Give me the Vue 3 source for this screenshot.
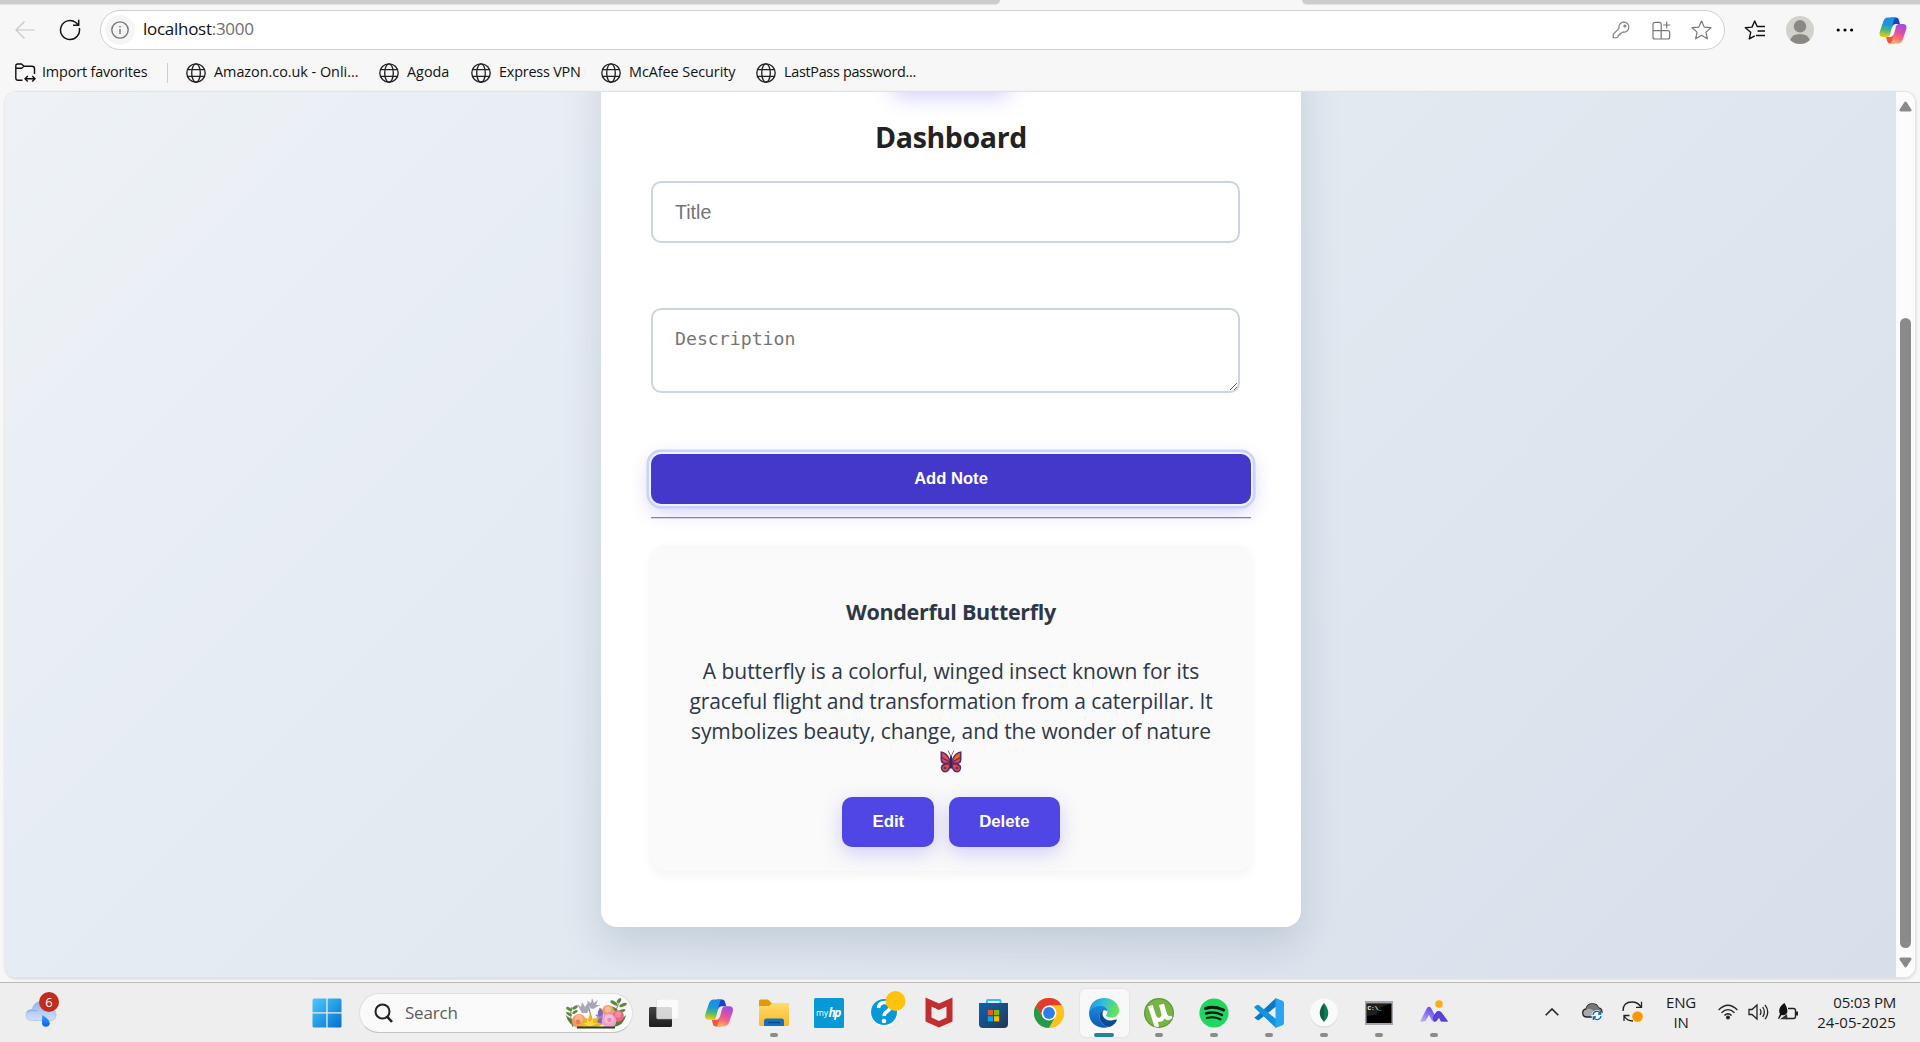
<script setup>
import { ref } from 'vue'

const bookmarks = [
  { label: 'Amazon.co.uk - Onli...', width: 145, spacing: -0.02 },
  { label: 'Agoda', width: 44, spacing: 0 },
  { label: 'Express VPN', width: 82, spacing: -0.2 },
  { label: 'McAfee Security', width: 107, spacing: -0.05 },
  { label: 'LastPass password...', width: 134, spacing: -0.3 }
]
const title = ref('')
const description = ref('')
</script>

<template>
  <div class="screen">
    <svg class="defs" width="0" height="0">
      <defs>
        <linearGradient id="cpA" x1="0.4" y1="0" x2="0.3" y2="1">
          <stop offset="0" stop-color="#1a8df0" /><stop offset="0.35" stop-color="#1b95d8" />
          <stop offset="0.65" stop-color="#4db774" /><stop offset="1" stop-color="#f5cf0a" />
        </linearGradient>
        <linearGradient id="cpB" x1="0.7" y1="0" x2="0.4" y2="1">
          <stop offset="0" stop-color="#9a4cf0" /><stop offset="0.45" stop-color="#e0519f" />
          <stop offset="0.75" stop-color="#fb6f7b" /><stop offset="1" stop-color="#ffb268" />
        </linearGradient>
        <symbol id="copilot" viewBox="0 0 28 27">
          <path d="M12 .5H17C18.7.5 19.4 1.6 19.9 3.2L21 7H17C14.8 7 14 8.2 13.4 10Z" fill="#1743c4" />
          <path d="M16 26.5H11C9.3 26.5 8.6 25.4 8.1 23.8L7 20H11C13.2 20 14 18.8 14.6 17Z" fill="#f4553c" />
          <path d="M16.8.5H9C6.3.5 5 2.4 4.1 5L1 14C-.2 17.6.8 20 4 20H7.8C9.6 20 10.6 19 11.2 17L14.2 5.6C14.8 3.2 15.2 1.4 16.8.5Z" fill="url(#cpA)" />
          <path d="M11.2 26.5H19C21.7 26.5 23 24.6 23.9 22L27 13C28.2 9.4 27.2 7 24 7H20.2C18.4 7 17.4 8 16.8 10L13.8 21.4C13.2 23.8 12.8 25.6 11.2 26.5Z" fill="url(#cpB)" />
        </symbol>
        <symbol id="globe" viewBox="0 0 20 20">
          <g fill="none" stroke="#222" stroke-width="1.35">
            <circle cx="10" cy="10" r="9.2" /><ellipse cx="10" cy="10" rx="4.3" ry="9.2" />
            <path d="M1.6 6.6H18.4M1.6 13.4H18.4" />
          </g>
        </symbol>
      </defs>
    </svg>

    <div class="tabs"><span class="tab-left"></span><span class="tab-right"></span></div>

    <div class="toolbar">
      <svg class="back" width="20" height="20" viewBox="0 0 20 20" fill="none" stroke="#c6c6c6" stroke-width="1.2"><path d="M19.5 10H1M9.5 1.5L1 10L9.5 18.5" /></svg>
      <svg class="reload" width="22" height="22" viewBox="0 0 22 22" fill="none" stroke="#111" stroke-width="1.5"><path d="M20.3 9A9.5 9.5 0 1 1 16.8 3.5L19.5 6M19.7 .8V6.3H14" /></svg>
      <div class="address">
        <span class="site-info">
          <svg width="18" height="18" viewBox="0 0 18 18" fill="none" stroke="#707070" stroke-width="1.3"><circle cx="9" cy="9" r="8.2" /><path d="M9 8V13" /><path d="M9 5V6.5" /></svg>
        </span>
        <span class="url">localhost<em>:3000</em></span>
        <svg class="key" width="18" height="18" viewBox="0 0 18 18" fill="none" stroke="#777" stroke-width="1.1"><path d="M7 7.3A5 5 0 1 1 10.7 11L9.5 12.2H8V14H6.2V15.7L5 16.8H1.2V13.3Z" stroke-linejoin="round" /><circle cx="12.9" cy="5" r="1" /></svg>
        <svg class="apps" width="19" height="19" viewBox="0 0 19 19" fill="none" stroke="#777" stroke-width="1.2"><path d="M9.2 9.6V3.3Q9.2 1.3 7.200 1.3H3Q1 1.3 1 3.300V16Q1 18 3 18H15.700Q17.700 18 17.700 16V11.500Q17.700 9.600 15.700 9.600H1M9.200 18V9.600M14.700 .5V7.500M11.200 4H18.200" /></svg>
        <svg class="star" width="21" height="20" viewBox="0 0 21 20" fill="none" stroke="#777" stroke-width="1.2" stroke-linejoin="round"><path d="M10.5 1L13.2 7.1L20 7.7L14.9 12.1L16.4 18.8L10.5 15.3L4.6 18.8L6.1 12.1L1 7.7L7.8 7.1Z" /></svg>
      </div>
      <svg class="favs" width="22" height="20" viewBox="0 0 22 20" fill="none" stroke="#111" stroke-width="1.4" stroke-linejoin="round"><path d="M10.8 15.8L5.3 18.9L6.7 12.3L1.3 7.8L8 7.1L10.7 1L13.2 6.5H21M13.5 11H21M12 15.5H21" /></svg>
      <svg class="avatar" width="28" height="28" viewBox="0 0 28 28"><circle cx="14" cy="14" r="14" fill="#d3d1cc" /><circle cx="14" cy="10.3" r="6.2" fill="#8b8784" /><path d="M4.2 24Q6 18 14 18T23.8 24A14 14 0 0 1 4.2 24Z" fill="#8b8784" /></svg>
      <svg class="dots" width="18" height="4" viewBox="0 0 18 4"><circle cx="2.2" cy="2" r="1.6" /><circle cx="9" cy="2" r="1.6" /><circle cx="15.6" cy="2" r="1.6" /></svg>
      <svg class="cp-top" width="28" height="27"><use href="#copilot" /></svg>
    </div>

    <div class="bookmarks">
      <svg width="21" height="20" viewBox="0 0 21 20" fill="none" stroke="#111" stroke-width="1.4"><path d="M7.5 17.3H3Q.8 17.3.8 15V3Q.8 1 2.8 1H6.5L9 3.3H17Q19.5 3.3 19.5 5.8V11M.8 5.3H6.5L9 3.3M10.5 15.8H19.5M12.8 13L10 15.8L12.8 18.6M17.2 13L20 15.8L17.2 18.6" /></svg>
      <span class="import">Import favorites</span>
      <span class="divider"></span>
      <div v-for="b in bookmarks" :key="b.label" class="bookmark">
        <svg width="20" height="20"><use href="#globe" /></svg>
        <span :style="{ width: b.width + 'px', letterSpacing: b.spacing + 'px' }">{{ b.label }}</span>
      </div>
    </div>

    <div class="frame">
      <main class="page">
        <section class="card">
          <button class="btn logout"></button>
          <h2>Dashboard</h2>
          <input v-model="title" class="field" placeholder="Title" />
          <textarea v-model="description" class="field area" placeholder="Description"></textarea>
          <button class="btn add">Add Note</button>
          <hr />
          <article class="note">
            <h3>Wonderful Butterfly</h3>
            <p>
              <span class="l1">A butterfly is a colorful, winged insect known for its</span><br />
              <span class="l2">graceful flight and transformation from a caterpillar. It</span><br />
              <span class="l3">symbolizes beauty, change, and the wonder of nature</span>
            </p>
            <div class="emoji">
              <svg width="22" height="23" viewBox="0 0 22 23">
                <path d="M.5 1.2Q7 1.6 10.3 9.5H11.7Q15 1.6 21.5 1.2V10Q21 13.6 18.5 13.8Q21.4 14.8 21.2 18Q20.6 22.4 16.8 22.5Q12.8 22 11.5 17H10.5Q9.2 22 5.2 22.5Q1.4 22.4.8 18Q.6 14.8 3.5 13.8Q1 13.6.5 10Z" fill="#5b2d68" />
                <path d="M2 3Q7 4.5 9.3 11L2.4 7.2ZM2 8.6L8.8 12.2Q3 13.5 2 10ZM2.3 17.5Q4 14 9.2 14.8Q8.6 20.5 5 21Q2 20.6 2.3 17.5Z" fill="#e24b4f" />
                <path d="M20 3Q15 4.5 12.7 11L19.6 7.2Z" fill="#ff6507" />
                <path d="M20 8.6L13.2 12.2Q19 13.5 20 10ZM19.7 17.5Q18 14 12.8 14.8Q13.4 20.5 17 21Q20 20.6 19.7 17.5Z" fill="#e24b4f" />
                <circle cx="5" cy="18" r="1.3" fill="#5b2d68" /><circle cx="17" cy="18" r="1.3" fill="#5b2d68" />
                <path d="M11 6V18.5" stroke="#412052" stroke-width="2" /><path d="M11 6.5L8 .5M11 6.5L14 .5" stroke="#6b4b77" stroke-width=".8" fill="none" />
              </svg>
            </div>
            <div class="actions">
              <button class="btn">Edit</button>
              <button class="btn">Delete</button>
            </div>
          </article>
        </section>
      </main>
      <div class="scrollbar">
        <svg width="13" height="11" viewBox="0 0 13 11"><path d="M5.2 1.5Q6.5-.3 7.8 1.5L12.3 8.3Q13 10.3 11 10.5H2Q0 10.3.7 8.3Z" fill="#8a8a8a" /></svg>
        <span class="thumb"></span>
        <svg width="13" height="11" viewBox="0 0 13 11"><path d="M5.2 9.5Q6.5 11.3 7.8 9.5L12.3 2.7Q13 .7 11 .5H2Q0 .7.7 2.7Z" fill="#8a8a8a" /></svg>
      </div>
    </div>

    <footer class="taskbar">
      <div class="weather">
        <svg width="36" height="38" viewBox="0 0 36 38">
          <defs><linearGradient id="cl" x1="0" y1="0" x2="0" y2="1"><stop offset="0" stop-color="#8fb2ee" /><stop offset="1" stop-color="#d3e1f7" /></linearGradient>
            <linearGradient id="dr" x1="0" y1="0" x2="0" y2="1"><stop offset="0" stop-color="#3d9bff" /><stop offset="1" stop-color="#0a62e8" /></linearGradient></defs>
          <path d="M7 30.5Q1 30.5 1 25T7 19.5Q9 11.5 16 11.5T25.5 18.5Q31 19.5 31 25T25 30.5Z" fill="url(#cl)" stroke="#9bb8ea" stroke-width=".6" />
          <path d="M2 22Q6 18.5 12 21" fill="none" stroke="#84a7e6" />
          <path d="M17.2 25Q25 29.5 24.8 33.8A4 4 0 0 1 17 33.5Z" fill="url(#dr)" />
        </svg>
        <span class="count">6</span>
      </div>
      <svg class="start" width="30" height="30" viewBox="0 0 30 30">
        <defs><linearGradient id="win" x1="0" y1="0" x2="1" y2="1"><stop offset="0" stop-color="#4cc9fb" /><stop offset="1" stop-color="#0370cd" /></linearGradient></defs>
        <path d="M.5 2Q.5.5 2 .5H14.3V14.3H.5ZM15.6.5H28Q29.5.5 29.5 2V14.3H15.6ZM.5 15.6H14.3V29.5H2Q.5 29.5.5 28ZM15.6 15.6H29.5V28Q29.5 29.5 28 29.5H15.6Z" fill="url(#win)" />
      </svg>
      <div class="search">
        <svg width="19" height="20" viewBox="0 0 19 20" fill="none" stroke="#222" stroke-width="2"><circle cx="8.5" cy="8.5" r="7" /><path d="M13.2 13.7L18 19" stroke-width="2.6" /></svg>
        <span>Search</span>
        <svg class="flowers" width="62" height="32" viewBox="0 0 62 32">
          <path d="M1 18Q3 29 14 30L18 24Q8 25 1 18ZM61 18Q59 29 48 30L44 24Q54 25 61 18Z" fill="#4e7e3a" />
          <path d="M8 30Q4 19 7 10M50 26Q49 12 56 3M28 26L24 12M32 26L35 11" stroke="#6b8b52" fill="none" />
          <g fill="#5f8745"><ellipse cx="4" cy="12" rx="3.2" ry="1.5" transform="rotate(35 4 12)" /><ellipse cx="10" cy="10.5" rx="3.2" ry="1.5" transform="rotate(-35 10 10.5)" /><ellipse cx="4" cy="17" rx="3.2" ry="1.4" transform="rotate(30 4 17)" /><ellipse cx="10" cy="15" rx="3" ry="1.4" transform="rotate(-30 10 15)" /><ellipse cx="49" cy="6" rx="4" ry="1.8" transform="rotate(30 49 6)" /><ellipse cx="58" cy="8" rx="4" ry="1.7" transform="rotate(-20 58 8)" /><ellipse cx="49" cy="12" rx="4" ry="1.7" transform="rotate(25 49 12)" /><ellipse cx="57" cy="14" rx="3.5" ry="1.5" transform="rotate(-20 57 14)" /><ellipse cx="54" cy="3.5" rx="3" ry="1.5" transform="rotate(-50 54 3.5)" /></g>
          <path d="M17 16L12 7L16 10L17 5L20 10L24 4V11L27 8L22 16ZM25 11L22 4L26 6L27 1L29 6L33 3L31 8L35 8L28 12Z" fill="#a9a6b7" />
          <circle cx="14" cy="24" r="7" fill="#f39a68" /><circle cx="14" cy="22" r="4.2" fill="#f9b487" /><circle cx="13" cy="25" r="2.4" fill="#e87e4e" />
          <circle cx="43" cy="14" r="6" fill="#f29a70" /><circle cx="43" cy="12.5" r="3" fill="#f8bd94" />
          <path d="M32 28L33 14L36 11L38 15L37 28Z" fill="#7f68b8" /><path d="M31 18L39 22M31 24L38 18" stroke="#9883cb" stroke-width="1.5" />
          <circle cx="53" cy="19" r="5.8" fill="#ee6583" /><circle cx="53" cy="17.5" r="3" fill="#f58d9f" />
          <circle cx="44" cy="24" r="7.3" fill="#f0a0cb" /><circle cx="44" cy="22" r="4.6" fill="#f7bcdb" /><circle cx="44.5" cy="23" r="2.3" fill="#e887bb" />
          <path d="M25 31L13 28L19 25L18 20L23 22L25 17L28 22L34 20L32 25L38 27L31 31Z" fill="#edb51e" /><path d="M25 30L18 26L22 26L22 22L25 25L28 21L28 26L33 26Z" fill="#fad84a" />
          <path d="M12 30.5H50" stroke="#28401d" stroke-width="2" />
        </svg>
      </div>

      <div class="apps-row">
        <div class="app">
          <svg width="30" height="28" viewBox="0 0 30 28"><defs><linearGradient id="tv" x1="0" y1="0" x2="0" y2="1"><stop offset="0" stop-color="#444" /><stop offset="1" stop-color="#1d1d1d" /></linearGradient></defs><rect x="0" y="8" width="23" height="20" rx="1.5" fill="url(#tv)" /><rect x="7.5" y="0" width="22.5" height="20" rx="1.5" fill="#fdfdfd" opacity=".8" stroke="#d0d0d0" stroke-width=".5" /></svg>
        </div>
        <div class="app"><svg width="30" height="28"><use href="#copilot" /></svg></div>
        <div class="app run">
          <svg width="30" height="28" viewBox="0 0 30 28"><defs><linearGradient id="fo" x1="0" y1="0" x2="0" y2="1"><stop offset="0" stop-color="#ffdc6d" /><stop offset="1" stop-color="#fbb923" /></linearGradient></defs><path d="M0 2Q0 .5 1.5.5H9L12.5 4H28Q30 4 30 6V12H0Z" fill="#dd9c0a" /><path d="M0 7H10L13 4H28.5Q30 4 30 5.5V25.5Q30 27 28.5 27H1.5Q0 27 0 25.5Z" fill="url(#fo)" /><path d="M5 27V22Q5 19.5 7.5 19.5H22.5Q25 19.5 25 22V27Z" fill="#126fc2" /><path d="M9 23.5H21" stroke="#07458a" stroke-width="1.4" /></svg>
        </div>
        <div class="app">
          <svg class="myhp" width="30" height="30" viewBox="0 0 30 30"><rect width="30" height="30" rx="1.5" fill="#0798d8" /><text x="2" y="18" fill="#fff" font-size="8.5" font-family="Open Sans, sans-serif">my</text><text x="14.5" y="18.500" fill="#fff" font-size="12" letter-spacing="-1.6" font-weight="700" font-style="italic" font-family="Open Sans, sans-serif">hp</text></svg>
        </div>
        <div class="app">
          <svg class="help" width="36" height="36" viewBox="0 0 36 36"><circle cx="14.5" cy="21.5" r="14" fill="#fff" /><circle cx="14" cy="21" r="13" fill="#0798d8" /><path d="M8.5 17Q9 11.5 14.5 11.5T20 16Q20 18.8 17 20.5T14.2 25" fill="none" stroke="#fff" stroke-width="3.6" /><circle cx="14" cy="30" r="2.3" fill="#fff" /><circle cx="25.5" cy="10" r="10" fill="#ffc20e" /></svg>
        </div>
        <div class="app">
          <svg width="28" height="31" viewBox="0 0 28 31"><path d="M.5.5L14 6.5L27.500.5V24.500L14 30.500L.5 24.500Z" fill="#c22e30" /><path d="M6.500 9.500L14 13L21.500 9.500V20.500L14 24L6.500 20.500Z" fill="#eee" /></svg>
        </div>
        <div class="app">
          <svg class="store" width="29" height="30" viewBox="0 0 29 30"><defs><linearGradient id="ms" x1="0" y1="0" x2="1" y2="1"><stop offset="0" stop-color="#0f62b0" /><stop offset="1" stop-color="#253556" /></linearGradient></defs><path d="M8 6V3Q8 2 9 2H20.500Q21.500 2 21.500 3V6" fill="none" stroke="#32c0f6" stroke-width="2" /><path d="M0 5H29V26Q29 30 25 30H4Q0 30 0 26Z" fill="url(#ms)" /><path d="M8.800 12H14V17.200H8.800Z" fill="#f35325" /><path d="M15 12H20.200V17.200H15Z" fill="#81bc06" /><path d="M8.800 18.200H14V23.400H8.800Z" fill="#05a6f0" /><path d="M15 18.200H20.200V23.400H15Z" fill="#ffba08" /></svg>
        </div>
        <div class="app">
          <svg width="30" height="30" viewBox="0 0 30 30"><circle cx="15" cy="15" r="15" fill="#fdc31c" /><path d="M2 7.500A15 15 0 0 1 28 7.500H15L8.500 18.750Z" fill="#e33b2e" /><path d="M2 7.500A15 15 0 0 0 15 30L21.500 18.750H8.500Z" fill="#229a49" /><path d="M15 7.500H28A15 15 0 0 1 15 30L21.500 18.750Z" fill="#fdc31c" /><circle cx="15" cy="15" r="7.500" fill="#fff" /><circle cx="15" cy="15" r="5.900" fill="#2f7ded" /></svg>
        </div>
        <div class="app run active">
          <svg width="30" height="30" viewBox="0 0 30 30"><defs><linearGradient id="e1" x1="0" y1="0" x2="1" y2=".3"><stop offset="0" stop-color="#1c8fe0" /><stop offset=".5" stop-color="#31bfd8" /><stop offset="1" stop-color="#64e25a" /></linearGradient><linearGradient id="e2" x1="0" y1="0" x2="0" y2="1"><stop offset="0" stop-color="#1a8ae0" /><stop offset="1" stop-color="#0d59b4" /></linearGradient></defs><path d="M0 14C1 5 7 0 15 0C24 0 30 6 30 12.500C30 17 26.500 19.500 22.500 19.500C19 19.500 17 18.300 17 17.300C17 16.500 18.500 16 18.500 13.500C18.500 11 16 8 11.500 8C5 8 1 11 0 14Z" fill="url(#e1)" /><path d="M0 15C0 11 5 7.800 11.500 7.800C16.500 7.800 18.600 11.200 18.500 13.500C15.500 10.500 10.500 13.500 10.500 18.500C10.500 24 15 28 20 29C9 32 0 25 0 15Z" fill="url(#e2)" /><path d="M10.500 18.500C10.500 15 12.500 12.700 14.500 12.300C11.500 17 15.500 22.500 21 22.500C24.500 22.500 26.500 20.800 27.700 21.600C28.500 22.500 25 28 20 29C15 28 10.500 24 10.500 18.500Z" fill="#0c4a94" /></svg>
        </div>
        <div class="app run">
          <svg width="30" height="30" viewBox="0 0 30 30"><circle cx="15" cy="15" r="15" fill="#5a9a35" /><circle cx="15" cy="15" r="13.700" fill="#76b446" /><path d="M4 8.500L8.700 7L12 17.500Q13.200 20.500 15.800 19.500Q18 18.500 17.300 15.500L15 7L20 5.800L23 16Q24 19 27.500 17.800L28.500 20Q24 24 20.500 20.500Q18.500 24.500 14 23.500L15 29L10.500 28.500Z" fill="#fff" /></svg>
        </div>
        <div class="app run">
          <svg width="30" height="30" viewBox="0 0 30 30"><circle cx="15" cy="15" r="14.600" fill="#1ed760" /><g fill="none" stroke="#0b1710" stroke-linecap="round"><path d="M6.500 10.500Q16 7.500 24.500 12" stroke-width="3" /><path d="M7 15.500Q15.500 12.800 23 17" stroke-width="2.400" /><path d="M7.800 20Q15 17.800 21.500 21.300" stroke-width="2" /></g></svg>
        </div>
        <div class="app run">
          <svg width="30" height="30" viewBox="0 0 30 30"><path d="M2 18.500L22 0V8.500L5 22Q4 22.600 3 21.800L.7 20Q0 19.200 2 18.500Z" fill="#0a78c4" /><path d="M.7 10Q0 9 .7 8.500L3 7Q4 6.500 5 7.200L22 21V30Z" fill="#1592dd" /><path d="M21.500 0L28.500 2.800Q30 3.500 30 5V25Q30 26.500 28.500 27.200L21.500 30Z" fill="#28a4f0" /></svg>
        </div>
        <div class="app run">
          <svg width="30" height="30" viewBox="0 0 30 30"><circle cx="15" cy="15.500" r="14" fill="#d5d5d5" /><circle cx="15" cy="14.500" r="14" fill="#fafafa" /><path d="M15 5Q21.500 13 18 20L15 24V5Z" fill="#0b7d54" /><path d="M15 5Q8.500 13 12 20L15 24V5Z" fill="#0c5e45" /></svg>
        </div>
        <div class="app run">
          <svg width="28" height="24" viewBox="0 0 28 24"><rect width="28" height="24" fill="#a2a7ad" /><rect x="1.500" y="2.500" width="25" height="19.500" fill="#000" /><path d="M2 3H25Q14 5 11 14L2 15Z" fill="#333" opacity=".6" /><text x="2.500" y="8.500" fill="#fff" font-size="6" font-family="Liberation Mono, monospace" font-weight="700">C:\_</text></svg>
        </div>
        <div class="app run">
          <svg class="mtn" width="30" height="24" viewBox="0 0 30 24"><defs><linearGradient id="mt" x1="0" y1="1" x2="1" y2="0"><stop offset="0" stop-color="#c4b5ff" /><stop offset=".5" stop-color="#7a64e8" /><stop offset="1" stop-color="#5134cf" /></linearGradient></defs><path d="M1 22.500L8 9Q10 6.500 12 9L15.500 15.500L18 12.500Q20.500 11 22.500 13.500L29 22.500H22L20 18.500L17.500 22Q15 24 12.500 21L10 16L6.500 22Q4 23 1 22.500Z" fill="url(#mt)" /><path d="M15.500 15.500L18 12.500Q20.500 11 22.500 13.500L29 22.500H22L20 18.500L17.500 22Q16.500 23 15 22.800L13.500 19Z" fill="#5a40d6" /><circle cx="20" cy="5" r="3.800" fill="#ffae12" /></svg>
        </div>
      </div>

      <div class="tray">
        <svg width="14" height="8" viewBox="0 0 14 8" fill="none" stroke="#222" stroke-width="1.600"><path d="M.7 7.300L7 1L13.300 7.300" /></svg>
        <svg class="cloud" width="21" height="18" viewBox="0 0 21 18"><path d="M5 14Q.7 14 .7 9.800Q.7 6.500 4 6Q5.500 1 10.500 1Q15 1 16.500 5Q20 5.500 20 9.500L16 14Z" fill="#aaa" stroke="#222" stroke-width="1.300" /><path d="M4 6Q10 5 15 11L19.500 8Q19 5.500 16.500 5Q15 1 10.500 1Q5.500 1 4 6Z" fill="#777" /><circle cx="15" cy="12.500" r="5.500" fill="#f5fbff" /><path d="M11 12A4 4 0 0 1 18.500 10.500M18.700 8V11H16M19 13A4 4 0 0 1 11.500 14.500M11.300 17V14H14" fill="none" stroke="#0b67b9" stroke-width="1.300" /></svg>
        <svg class="sync" width="21" height="21" viewBox="0 0 21 21" fill="none" stroke="#222" stroke-width="1.300"><path d="M1 10Q1 1 10 1Q16 1 19 6M19.500 .8V6.300H14M2 20V14.500H7.500M2 14.500Q4.500 20 11 20" /><circle cx="15.500" cy="15.500" r="5.300" fill="#ff9800" stroke="none" /></svg>
        <div class="lang"><span>ENG</span><span>IN</span></div>
        <svg class="wifi" width="20" height="16" viewBox="0 0 20 16" fill="none" stroke="#222" stroke-width="1.300"><path d="M.6 6Q10-3.500 19.400 6M3.500 8.800Q10 2.300 16.500 8.800M6.400 11.500Q10 8 13.600 11.500" /><circle cx="10" cy="13.500" r="1.300" fill="#222" /></svg>
        <svg class="vol" width="21" height="18" viewBox="0 0 21 18" fill="none" stroke="#222" stroke-width="1.300"><path d="M1 6.500H4L9 2V16L4 11.500H1ZM12 6Q14 9 12 12M14.700 4Q18 9 14.700 14M17 1.800Q22.500 9 17 16.200" /></svg>
        <svg class="bat" width="21" height="18" viewBox="0 0 21 18"><path d="M8 15.500H15.500Q17.500 15.500 17.500 13.500V7.500Q17.500 5.500 15.500 5.500H10" fill="none" stroke="#222" stroke-width="1.400" /><path d="M18 8.500H20V12.500H18Z" fill="#222" /><path d="M6.500 0Q10.500 6 9 10Q7 13 3.500 12L1 16L0 15.500L2 11Q-1 5 6.500 0Z" fill="#111" /><path d="M2 16.200H9.500L9 11Z" fill="#333" /></svg>
        <div class="clock"><span>05:03 PM</span><span class="date">24-05-2025</span></div>
      </div>
    </footer>
  </div>
</template>

<style>
body { margin: 0; overflow: hidden; }
</style>

<style scoped>
.screen { width: 1920px; height: 1042px; display: flex; flex-direction: column; background: #f7f7f7; font-family: "Open Sans", "Noto Sans", sans-serif; overflow: hidden; }
.defs { position: absolute; }
svg { flex: none; display: block; }
.tabs { height: 5px; display: flex; justify-content: space-between; flex: none; }
.tabs span { background: #ccc; border-bottom: 1px solid #e2e2e2; box-sizing: border-box; }
.tab-left { width: 1000px; border-bottom-right-radius: 7px; }
.tab-right { width: 618px; border-bottom-left-radius: 7px; }
.toolbar { height: 50px; flex: none; display: flex; align-items: center; padding-left: 15px; }
.reload { margin-left: 24px; }
.address { box-sizing: border-box; width: 1625px; height: 40px; margin-left: 19px; border: 1px solid #cfcfcf; border-radius: 20px; background: #fff; display: flex; align-items: center; padding-left: 4px; }
.site-info { width: 30px; height: 30px; border-radius: 50%; background: #f5f5f5; display: flex; align-items: center; justify-content: center; }
.url { margin-left: 8px; margin-top: -3px; font-size: 17px; letter-spacing: -0.28px; color: #111; flex: 1; white-space: nowrap; }
.url em { font-style: normal; color: #6d6d6d; }
.apps { margin-left: 22px; }
.star { margin: 0 12px 0 20px; }
.favs { margin-left: 19px; }
.avatar { margin-left: 20px; }
.dots { margin-left: 22px; }
.cp-top { margin-left: 25px; }
.bookmarks { height: 35px; flex: none; display: flex; align-items: center; padding-left: 15px; font-size: 14.4px; color: #111; white-space: nowrap; }
.import { width: 105px; margin: -2px 0 0 6px; letter-spacing: -0.15px; }
.divider { width: 1px; height: 20px; background: #ccc; margin: 0 18px 0 20px; }
.bookmark { display: flex; align-items: center; gap: 8px; margin-right: 20px; }
.bookmark span { display: block; margin-top: -2px; }
.frame { flex: none; box-sizing: border-box; height: 887px; width: 1911px; margin: 1px 0 0 5px; border: 1px solid #e3e3e5; border-left: 0; border-radius: 12px; overflow: hidden; display: flex; box-shadow: 0 1px 3px rgba(0,0,0,.15); }
.page { flex: 1; overflow: hidden; background: linear-gradient(135deg, #eef2f6 0%, #e6ecf4 30%, #e0e8f0 55%, #d8dfeb 100%); }
.card { box-sizing: border-box; width: 700px; height: 885px; margin: -50px 0 0 596px; padding: 0 50px; background: #fff; border-radius: 16px; box-shadow: 0 16px 40px rgba(30,50,80,.15); display: flex; flex-direction: column; align-items: center; }
.btn { font: 700 16.8px "Liberation Sans", Arial, sans-serif; height: 50px; padding: 0 30px; border: 0; border-radius: 10px; color: #fff; background: #4f46e5; box-shadow: 0 6px 20px rgba(79,70,229,.25); flex: none; }
.logout { width: 118px; height: 50px; margin-top: -1px; }
h2 { margin: 26px 0 0; height: 40px; line-height: 40px; font-size: 28.5px; font-weight: 700; letter-spacing: -0.35px; color: #222; white-space: nowrap; }
.field { box-sizing: border-box; width: 589px; height: 62px; flex: none; align-self: flex-start; margin: 24px 0 0; padding: 0 22px; border: 2px solid #cbd5e1; border-radius: 10px; font: 19.6px "Liberation Sans", Arial, sans-serif; background: #fff; outline: none; }
.field::placeholder { color: #757575; opacity: 1; }
.area { height: 85px; margin-top: 65px; padding: 18px 22px; font: 18.2px "DejaVu Sans Mono", monospace; resize: both; }
.add { width: 600px; margin-top: 61px; font-size: 16.6px; background: #4338ca; box-shadow: 0 0 0 2px #f0f2ff, 0 0 0 4.500px #c7d2fe, 0 6px 20px rgba(79,70,229,.3); }
hr { box-sizing: border-box; width: 600px; height: 2px; margin: 13px 0 0; border: 0; border-top: 1px solid #85858f; border-bottom: 1px solid #d8d7e2; flex: none; }
.note { box-sizing: border-box; width: 600px; height: 326px; margin-top: 26px; border-radius: 14px; background: #fafafa; box-shadow: 0 4px 12px rgba(0,0,0,.05); color: #2d3748; text-align: center; flex: none; }
h3 { margin: 52px 0 0; line-height: 30px; font-size: 21.500px; font-weight: 700; letter-spacing: -0.3px; white-space: nowrap; }
p { margin: 29px 0 0; font-size: 21px; line-height: 30px; white-space: nowrap; }
.l1 { letter-spacing: -0.03px; }
.l2 { letter-spacing: -0.1px; }
.l3 { letter-spacing: -0.08px; }
.emoji { height: 30px; display: flex; align-items: center; justify-content: center; box-sizing: border-box; }
.actions { display: flex; justify-content: center; gap: 15px; margin-top: 21px; }
.scrollbar { width: 19px; background: #fcfcfc; display: flex; flex-direction: column; align-items: center; padding: 9px 0 8px; box-sizing: border-box; }
.thumb { width: 11px; height: 630px; border-radius: 6px; background: #8a8a8a; margin-top: 206px; margin-bottom: 9px; flex: none; }
.taskbar { margin-top: 4px; height: 60px; box-sizing: border-box; border-top: 1px solid #b9b9b9; background: #eee; display: flex; align-items: center; flex: none; position: relative; }
.weather { position: relative; margin-left: 25px; width: 36px; height: 38px; }
.weather svg { margin-top: -4px; }
.count { position: absolute; left: 14px; top: -2px; width: 20px; height: 20px; line-height: 20px; border-radius: 50%; background: #c42b1c; color: #fff; font-size: 13px; text-align: center; }
.start { margin-left: 251px; }
.search { box-sizing: border-box; width: 274px; height: 40px; margin-left: 17px; border: 1px solid #dedede; border-bottom-color: #c4c4c4; border-radius: 20px; background: #fafafa; display: flex; align-items: center; padding-left: 14px; font-size: 17px; letter-spacing: -.2px; color: #5c5c5c; }
.search span { margin-left: 12px; flex: 1; }
.flowers { margin: 1px 5px 0 0; }
.apps-row { display: flex; margin-left: 3.500px; }
.app { width: 55px; height: 48px; display: flex; align-items: center; justify-content: center; position: relative; }
.help { margin: -7px 0 0 7px; }
.myhp { overflow: visible; }
.store { margin-right: 2px; }
.mtn { margin-top: -4px; }
.run::after { content: ""; position: absolute; left: 23.500px; bottom: 0; width: 8px; height: 4px; border-radius: 2px; background: #8a8a8a; }
.active { width: 49px; margin: 0 3px; border-radius: 6px; background: #f8f8f8; box-shadow: 0 0 1px 1px #e5e5e5; }
.active::after { left: 14.500px; width: 20px; background: #268493; }
.tray { position: absolute; right: 24px; top: 0; height: 57px; display: flex; align-items: center; font-size: 15px; line-height: 20px; color: #1b1b1b; white-space: nowrap; letter-spacing: -.25px; }
.cloud { margin-left: 23px; }
.sync { margin-left: 19px; }
.lang { display: flex; flex-direction: column; align-items: center; width: 32px; margin-left: 22px; }
.wifi { margin-left: 21px; }
.vol { margin-left: 10px; }
.bat { margin-left: 9px; }
.clock { width: 94px; display: flex; flex-direction: column; align-items: flex-end; margin-left: 3px; }
.date { letter-spacing: .05px; }
</style>
